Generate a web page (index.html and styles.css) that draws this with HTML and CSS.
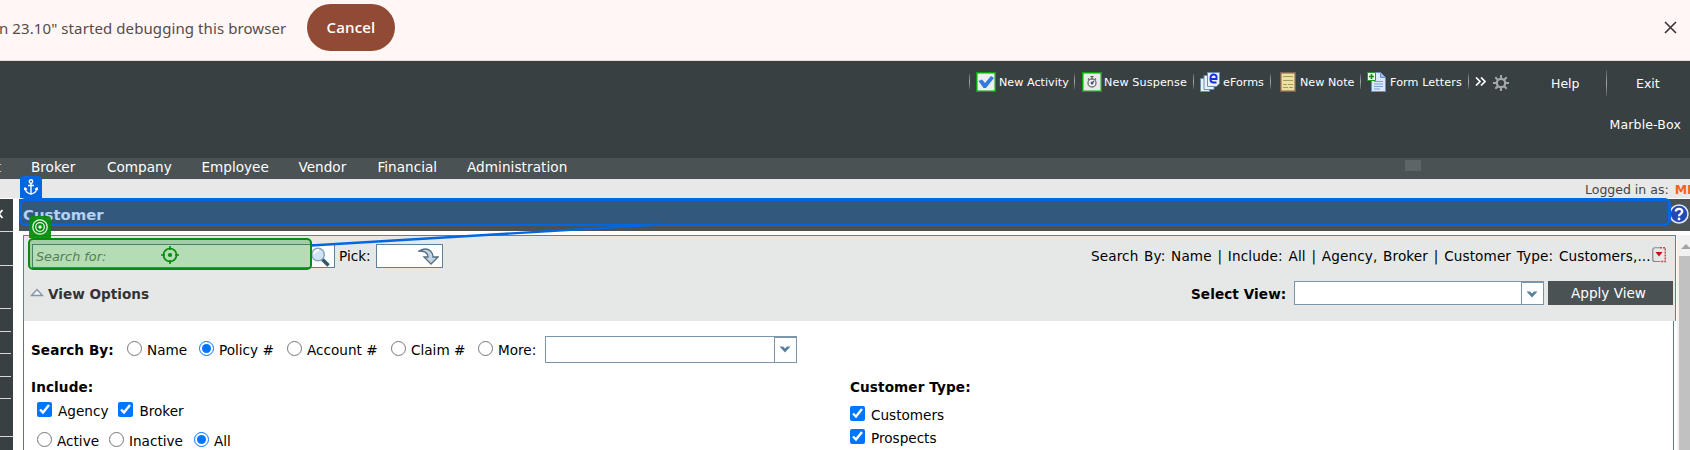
FILE: index.html
```html
<!DOCTYPE html>
<html lang="en">
<head>
<meta charset="utf-8">
<title>Customer</title>
<link rel="stylesheet" href="styles.css">
</head>
<body>
<div class="page">
  <div class="infobar">
    <span class="infobar-text">n 23.10" started debugging this browser</span>
    <button class="cancel">Cancel</button>
    <svg class="close" width="13" height="13" viewBox="0 0 13 13"><path d="M1 1l11 11M12 1L1 12" stroke="#3b3030" stroke-width="1.6" fill="none"/></svg>
  </div>

  <header class="header">
    <div class="tools">
      <div class="tool activity"><i class="sep"></i>
        <svg width="20" height="20" viewBox="0 0 20 20"><rect x=".75" y=".75" width="18.5" height="18.5" fill="#eee" stroke="#0ba50b" stroke-width="1.5"/><path d="M2.500 9L6 7.500l3 3.500 6-7 3 2-8 10H7.500z" fill="#2d7be0"/></svg>
        <span>New Activity</span></div>
      <div class="tool suspense"><i class="sep"></i>
        <svg width="20" height="20" viewBox="0 0 20 20"><rect x=".75" y=".75" width="18.500" height="18.500" fill="#eaeaea" stroke="#0ba50b" stroke-width="1.500"/><circle cx="10" cy="11" r="4" fill="#f5f7fa" stroke="#777" stroke-width="1.400"/><path d="M8.500 4.500h3M10 4.500V7M10 11l2-2M7 7.500l-1-1M13 7.500l1-1" stroke="#555" stroke-width="1.200"/><circle cx="10" cy="11" r="1.500" fill="#445588"/></svg>
        <span>New Suspense</span></div>
      <div class="tool eforms"><i class="sep"></i>
        <svg width="20" height="20" viewBox="0 0 20 20"><g fill="#e9f1fb" stroke="#6d8cab"><path d="M.5 6.500h9v13h-9z"/><path d="M4 3.500h10v14H4z"/><path d="M7.500.5h12v11l-3 3h-9z"/></g><path d="M10.500 7h6V4.500q-.5-2-3-2t-3 3v2q0 3 3 3h3" fill="none" stroke="#1530e0" stroke-width="1.900"/></svg>
        <span>eForms</span></div>
      <div class="tool note"><i class="sep"></i>
        <svg width="16" height="20" viewBox="0 0 16 20"><path d="M.75.75h14.500v18.500H.75z" fill="#ece2a0" stroke="#806050" stroke-width="1.500"/><path d="M3 4.500h10M3 8.500h10M3 12.500h4M8 12.500h5M3 15.500h5M9 15.500h4" stroke="#a59a60"/></svg>
        <span>New Note</span></div>
      <div class="tool letters"><i class="sep"></i>
        <svg width="20" height="20" viewBox="0 0 20 20"><path d="M4.500.5h9l5 5v14h-14z" fill="#dce9fb" stroke="#6b91ca"/><path d="M13.500.5v5h5" fill="#9ab9e8" stroke="#6b91ca"/><path d="M7 9.500h9M7 12h9M7 14.500h9M7 17h6" stroke="#7aa0d8"/><path d="M.5.5h8v8h-8z" fill="#f1fff0" stroke="#1f9a28"/><path d="M4.500 2v5M2 4.500h5" stroke="#128a18" stroke-width="1.700"/></svg>
        <span>Form Letters</span></div>
      <i class="sep last"></i>
      <svg class="more" width="11" height="9" viewBox="0 0 11 9"><path d="M1 .5l4 4-4 4M6 .5l4 4-4 4" fill="none" stroke="#fff" stroke-width="1.700"/></svg>
      <svg class="gear" width="16" height="16" viewBox="0 0 16 16"><path d="M8 0v16M0 8h16M2.300 2.300l11.400 11.400M13.700 2.300L2.300 13.700" stroke="#a5a8a8" stroke-width="2"/><circle cx="8" cy="8" r="4.200" fill="#384042" stroke="#a5a8a8" stroke-width="2.200"/></svg>
      <span class="link help">Help</span>
      <i class="sep tall"></i>
      <span class="link exit">Exit</span>
    </div>
    <div class="company">Marble-Box</div>
  </header>

  <nav class="menu">
    <span class="m-cut">t</span><span class="m1">Broker</span><span class="m2">Company</span><span class="m3">Employee</span><span class="m4">Vendor</span><span class="m5">Financial</span><span class="m6">Administration</span><i class="grip"></i>
  </nav>

  <div class="login"><span>Logged in as:</span><b>MB</b></div>

  <div class="body">
    <aside class="side"><div class="cell c1"><svg width="4" height="10" viewBox="0 0 4 10"><path d="M2.500 1L-1 5l3.500 4" fill="none" stroke="#fff" stroke-width="1.800"/></svg></div><div class="cell c2"></div><div class="cell c3"></div><div class="cell c4"></div><div class="cell c5"></div><div class="cell c6"></div><div class="cell c7"></div><div class="cell c8"></div></aside>

    <main class="main">
      <div class="title"><h1>Customer</h1>
        <svg width="20" height="20" viewBox="0 0 20 20"><circle cx="10" cy="10" r="9" fill="#2548b5" stroke="#dfe6f5" stroke-width="1.600"/><path d="M6.800 7.500Q7 4.800 10 4.800t3.200 2.500Q13.200 9 11.500 10 10 10.800 10 12.300" fill="none" stroke="#fff" stroke-width="2.300"/><circle cx="10" cy="15" r="1.400" fill="#fff"/></svg>
      </div>
      <div class="content">
        <section class="panel">
          <div class="top">
            <div class="row search-row">
              <div class="search"><em>Search for:</em>
                <svg width="20" height="20" viewBox="0 0 20 20"><path d="M12 12l6.500 6.500" stroke="#34576f" stroke-width="3.500"/><circle cx="8" cy="7.500" r="6.300" fill="#cfe4f6" stroke="#8ba4b8" stroke-width="1.500"/><path d="M4 7q1-4 5-4" stroke="#fff" stroke-width="1.800" fill="none"/></svg></div>
              <span class="pick-label">Pick:</span>
              <div class="pick"><svg width="21" height="17" viewBox="0 0 21 17"><path d="M1 3Q8-1 12.500 3 15 5.500 15 9h5l-7 7-7-7h4Q10 3 1 3z" fill="#c5d3de" stroke="#526f85" stroke-width="1.300"/></svg></div>
              <span class="summary">Search By: Name | Include: All | Agency, Broker | Customer Type: Customers,...</span>
              <svg class="drop" width="15" height="16" viewBox="0 0 15 16"><path d="M8 .75H3Q.75.75.75 3v9.500Q.75 14.500 3 14.500h5" fill="none" stroke="#888" stroke-width="1.200"/><path d="M8 .75h5.250V14.500H8" fill="none" stroke="#d23a4a" stroke-width="1.400" stroke-dasharray="2 1"/><path d="M3.500 5h7L7 9.500z" fill="#c4101c"/></svg>
            </div>
            <div class="row view-row">
              <svg class="tri" width="14" height="9" viewBox="0 0 14 9"><path d="M1.500 7.500L7 1.500l5.500 6z" fill="#f2f5f7" stroke="#8096a8" stroke-width="1.300"/></svg>
              <h2>View Options</h2>
              <b class="select-label">Select View:</b>
              <div class="combo view-combo"><i><svg width="12" height="7" viewBox="0 0 12 7"><path d="M.5.5h3.500l2 2 2-2h3.500l-5.500 6z" fill="#58809d"/></svg></i></div>
              <button class="apply">Apply View</button>
            </div>
          </div>
          <div class="options">
            <div class="row by-row">
              <b>Search By:</b>
              <label class="r1"><input type="radio" name="by">Name</label>
              <label class="r2"><input type="radio" name="by" checked>Policy #</label>
              <label class="r3"><input type="radio" name="by">Account #</label>
              <label class="r4"><input type="radio" name="by">Claim #</label>
              <label class="r5"><input type="radio" name="by">More:</label>
              <div class="combo more-combo"><i><svg width="12" height="7" viewBox="0 0 12 7"><path d="M.5.5h3.500l2 2 2-2h3.500l-5.500 6z" fill="#58809d"/></svg></i></div>
            </div>
            <div class="columns">
              <div class="include">
                <b>Include:</b>
                <div class="row inc1"><label><input type="checkbox" checked>Agency</label><label><input type="checkbox" checked>Broker</label></div>
                <div class="row inc2"><label class="a1"><input type="radio" name="st">Active</label><label class="a2"><input type="radio" name="st">Inactive</label><label class="a3"><input type="radio" name="st" checked>All</label></div>
              </div>
              <div class="types">
                <b>Customer Type:</b>
                <label><input type="checkbox" checked>Customers</label>
                <label><input type="checkbox" checked>Prospects</label>
              </div>
            </div>
          </div>
        </section>
        <div class="scroll"><i class="up"></i><i class="thumb"></i></div>
      </div>
    </main>
  </div>

  <svg class="link-line" width="1690" height="450" viewBox="0 0 1690 450"><path d="M311 245.500L660 224.500" stroke="#0067e0" stroke-width="2.400"/></svg>
  <div class="hl anchor"></div>
  <div class="tag anchor-tag"><svg width="14" height="16" viewBox="0 0 14 16"><g fill="none" stroke="#fff" stroke-width="1.400"><circle cx="7" cy="2.500" r="1.700"/><path d="M7 4.200V15M4 6.500h6M1 9q.5 5 6 6 5.500-1 6-6M.3 11L1 9l2 1.300M13.700 11L13 9l-2 1.300"/></g></svg></div>
  <div class="hl target"><svg width="18" height="18" viewBox="0 0 18 18"><g stroke="#068d0c" fill="none" stroke-width="1.700"><circle cx="9" cy="9" r="6.500"/><path d="M9 0v4M9 14v4M0 9h4M14 9h4"/></g><circle cx="9" cy="9" r="2.100" fill="#068d0c"/></svg></div>
  <div class="tag target-tag"><svg width="16" height="16" viewBox="0 0 16 16"><g fill="none" stroke="#e5f5e5" stroke-width="1.300"><circle cx="8" cy="8" r="7.200"/><circle cx="8" cy="8" r="4.300"/></g><circle cx="8" cy="8" r="1.700" fill="#e5f5e5"/></svg></div>
</div>
</body>
</html>
```
FILE: styles.css
```css
* { box-sizing: border-box; }
body { margin: 0; background: #fff; color: #000; font: 13.6px/16px Verdana, "DejaVu Sans", sans-serif; white-space: nowrap; }
button { border: 0; padding: 0; font: inherit; }
h1, h2 { margin: 0; }
svg { display: block; flex: none; }
.page { position: relative; width: 1690px; height: 450px; overflow: hidden; }

.infobar { height: 61px; display: flex; background: #fff7f6; border-bottom: 1px solid #f0d9d2; }
.infobar-text { width: 307px; padding-top: 17px; margin-left: -1px; margin-right: 1px; font: 15px/22px "Noto Sans", sans-serif; letter-spacing: .09px; color: #574b49; }
.cancel { width: 88px; height: 47px; margin-top: 4px; border-radius: 24px; background: #914a33; color: #fff; font: 600 15px/47px "Open Sans", sans-serif; letter-spacing: .15px; }
.close { margin: 21px 13px 0 auto; }

.header { height: 97px; background: #384042; color: #fff; }
.tools { height: 54px; padding-left: 969px; display: flex; }
.tool { display: flex; font-size: 11.2px; }
.tool span { padding: 14px 0 0 3px; }
.tool svg { margin: 11px 0 0 6px; }
.sep { width: 1px; height: 15px; margin-top: 13px; background: linear-gradient(#555c5e, #a5a8a8, #555c5e); }
.activity { width: 105px; }
.suspense { width: 119px; }
.suspense svg { margin-left: 7px; }
.suspense span { letter-spacing: .1px; padding-left: 2px; }
.eforms { width: 77px; }
.note { width: 90px; }
.note svg { margin-left: 9px; }
.note span { padding-left: 4px; }
.letters { width: 108px; }
.letters span { letter-spacing: .1px; }
.more { margin: 16px 0 0 6px; }
.gear { margin: 14px 0 0 7px; }
.link { font-size: 12.5px; padding-top: 15px; }
.help { width: 55px; margin-left: 42px; }
.tall { height: 26px; margin-top: 9px; }
.exit { margin-left: 29px; }
.company { padding: 2px 9px 0 0; text-align: right; font-size: 12.5px; letter-spacing: .15px; }

.menu { height: 21px; padding-top: 1px; display: flex; background: #4a5254; color: #fff; }
.m-cut { width: 31px; text-indent: -4px; color: #f0b070; }
.m1 { width: 76px; }
.m2 { width: 94.5px; }
.m3 { width: 97px; }
.m4 { width: 79px; }
.m5 { width: 89.5px; }
.m6 { width: 100px; letter-spacing: .06px; }
.grip { width: 16px; height: 11px; margin: 1px 0 0 838px; background: #5d6567; }

.login { height: 19px; padding: 3px 0 0 1585px; display: flex; gap: 6px; background: #e8e8e8; color: #444; font-size: 12.5px; }
.login b { color: #f26322; }

.body { display: flex; padding-top: 1px; }
.side { width: 13px; height: 251px; margin-right: 6px; background: #384042; }
.cell { border-bottom: 1px solid #d5d8d8; width: 11px; }
.c1 { height: 33px; width: 13px; padding-top: 10px; }
.c2 { height: 34px; width: 13px; }
.c3 { height: 43px; }
.c4 { height: 23px; }
.c5 { height: 22px; }
.c6 { height: 23px; }
.c7 { height: 22px; }
.c8 { height: 38px; width: 13px; }
.main { width: 1671px; }
.title { height: 32px; padding: 8px 1px 0 4px; display: flex; justify-content: space-between; background: #4a5254; }
.title h1 { font-size: 14.9px; line-height: 16px; color: #fff; }
.title svg { margin-top: -3px; }
.content { display: flex; justify-content: space-between; padding: 4px 0 0 4px; }
.panel { width: 1653px; height: 215px; border-top: 1px solid #5f809a; }
.top { height: 85px; background: #e6e8e7; border: solid #5f809a; border-width: 0 1px; }
.row { display: flex; }
.search-row { height: 37px; padding: 8px 0 0 8px; }
.search { width: 303px; height: 24px; display: flex; justify-content: space-between; background: #fff; border: 1px solid #5f809a; }
.search em { font-size: 12.8px; padding: 4px 0 0 3px; color: #777; }
.search svg { margin: 2px 4px 0 0; }
.pick-label { padding: 4px 0 0 4px; width: 41px; }
.pick { width: 67px; height: 24px; border: 1px solid #5f809a; background: #fff; padding: 3px 0 0 41px; }
.summary { margin: 4px 0 0 648px; width: 561px; letter-spacing: .11px; word-spacing: 1.3px; }
.drop { margin: 3px 0 0; }
.view-row { height: 48px; padding-left: 6px; }
.tri { margin-top: 15px; }
.view-row h2 { font-size: 13.6px; line-height: 16px; color: #333; margin: 13px 0 0 4px; width: 1143px; }
.select-label { padding-top: 13px; width: 103px; letter-spacing: .08px; }
.combo { display: flex; justify-content: flex-end; border: 1px solid #7b96a9; background: #fff; }
.combo i { width: 23px; border: 1px solid #7b96a9; margin: 0 -1px -1px 0; padding: 8px 0 0 4px; }
.view-combo { width: 250px; height: 24px; margin-top: 8px; }
.apply { width: 125px; height: 24px; margin: 8px 0 0 4px; padding-right: 4px; background: #4a5254; color: #fff; line-height: 22px; }
.options { width: 1651px; height: 129px; padding: 15px 0 0 7px; border: solid #5f7590; border-width: 0 1px; }
.by-row { height: 43px; }
.by-row > b { width: 96px; padding-top: 6px; letter-spacing: .08px; }
label { display: flex; padding-top: 6px; }
input { width: 15px; height: 15px; margin: -1px 5px 0 0; flex: none; }
.r1 { width: 72px; }
.r2 { width: 88px; }
.r3 { width: 104px; }
.r4 { width: 87px; }
.r5 { width: 67px; }
.more-combo { width: 252px; height: 27px; }
.more-combo i { padding-top: 8px; }
.columns { display: flex; }
.columns b { display: block; height: 17px; letter-spacing: .1px; }
.include { width: 819px; }
.types b { height: 21px; }
.inc1 { padding: 1px 0 0 6px; gap: 10px; }
.inc2 { padding: 8px 0 0 6px; }
.a1 { width: 72px; }
.a2 { width: 85px; }
.types label { padding-top: 7px; }
.include input[type="checkbox"], .types input { margin-right: 6px; }
.scroll { width: 13px; height: 215px; background: #f1f1f1; }
.up { display: block; width: 0; margin: 9px 0 0 4px; border: 5px solid transparent; border-top: 0; border-bottom-color: #a3a3a3; }
.thumb { display: block; margin: 7px 0 0 2px; height: 194px; background: #c1c1c1; }

.link-line { position: absolute; left: 0; top: 0; }
.hl { position: absolute; }
.anchor { left: 19px; top: 198px; width: 1652px; height: 28px; border: 3px solid #0067e0; border-bottom-width: 2px; border-radius: 6px; background: rgba(0, 103, 224, .3); }
.target { left: 28px; top: 238px; width: 284px; height: 32px; border: 2px solid #068d0c; border-radius: 5px; background: rgba(6, 141, 12, .3); padding: 6px 0 0 131px; }
.tag { position: absolute; width: 22px; height: 22px; display: flex; justify-content: center; padding-top: 3px; border-radius: 4px 4px 0 0; }
.anchor-tag { left: 20px; top: 176px; background: #0067e0; }
.target-tag { left: 29px; top: 216px; background: rgba(6, 141, 12, .94); }
```
